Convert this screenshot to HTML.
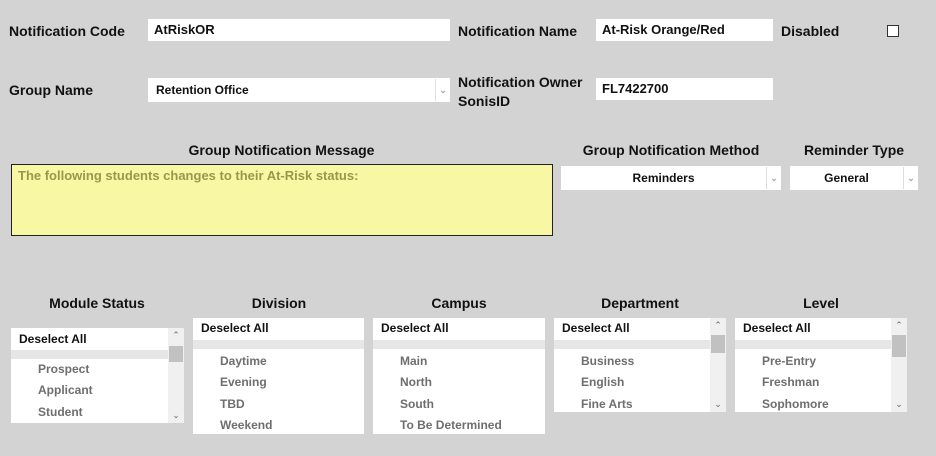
<!DOCTYPE html>
<html><head><meta charset="utf-8"><style>
*{margin:0;padding:0;box-sizing:border-box}
body{width:936px;height:456px;background:#d3d3d3;font-family:"Liberation Sans",sans-serif;position:relative;overflow:hidden;color:#111}
.a{position:absolute}
.lbl{font-weight:bold;font-size:14px;white-space:nowrap}
.inp{background:#fff;font-size:13px;font-weight:bold;padding-left:6px;line-height:22px}
.sel{background:#fff;font-size:12px;font-weight:bold;line-height:24px}
.arr{position:absolute;right:0;top:1px;bottom:1px;width:15px;border-left:1px solid #ddd;color:#aaa;font-size:9px;text-align:center;line-height:22px}
.h{font-weight:bold;font-size:14px;text-align:center}
.box{background:#fff;overflow:hidden}
.box .da{font-size:12px;font-weight:bold;padding-left:8px;height:22px;line-height:20px}
.box .sp{height:9px;background:#e6e6e6}
.box .it{font-size:12px;font-weight:bold;color:#6e6e6e;padding-left:27px;height:21.3px;line-height:21px}
.sb{position:absolute;right:0;top:0;bottom:0;width:16px;background:#f0f0f0;color:#666;font-size:9px;text-align:center}
.th{position:absolute;left:1px;width:14px;background:#c1c1c1}
</style></head><body>
<div class="a lbl" style="left:9px;top:23px">Notification Code</div>
<div class="a inp" style="left:148px;top:19px;width:302px;height:22px">AtRiskOR</div>
<div class="a lbl" style="left:458px;top:23px">Notification Name</div>
<div class="a inp" style="left:596px;top:19px;width:177px;height:22px">At-Risk Orange/Red</div>
<div class="a lbl" style="left:781px;top:23px">Disabled</div>
<div class="a" style="left:887px;top:25px;width:12px;height:12px;border:1px solid #333;background:#fff"></div>

<div class="a lbl" style="left:9px;top:82px">Group Name</div>
<div class="a sel" style="left:148px;top:78px;width:302px;height:24px;padding-left:8px">Retention Office<div class="arr">&#8964;</div></div>
<div class="a lbl" style="left:458px;top:73px;line-height:19px">Notification Owner<br>SonisID</div>
<div class="a inp" style="left:596px;top:78px;width:177px;height:22px">FL7422700</div>

<div class="a h" style="left:11px;width:541px;top:142px">Group Notification Message</div>
<div class="a" style="left:11px;top:164px;width:542px;height:72px;background:#f7f7a4;border:1px solid #222;font-size:13px;font-weight:bold;color:#98984a;padding:3px 6px">The following students changes to their At-Risk status:</div>
<div class="a h" style="left:561px;width:220px;top:142px">Group Notification Method</div>
<div class="a sel" style="left:561px;top:166px;width:220px;height:24px;text-align:center;padding-right:15px">Reminders<div class="arr">&#8964;</div></div>
<div class="a h" style="left:790px;width:128px;top:142px">Reminder Type</div>
<div class="a sel" style="left:790px;top:166px;width:128px;height:24px;text-align:center;padding-right:15px">General<div class="arr">&#8964;</div></div>

<div class="a h" style="left:11px;width:172px;top:295px">Module Status</div>
<div class="a box" style="left:11px;top:328px;width:173px;height:95px"><div class="da" style="height:22px;line-height:22px">Deselect All</div><div class="sp" style="margin-right:16px"></div><div class="it">Prospect</div><div class="it">Applicant</div><div class="it">Student</div>
<div class="sb"><div style="margin-top:2px">&#8963;</div><div class="th" style="top:18px;height:16px"></div><div style="position:absolute;bottom:2px;width:16px">&#8964;</div></div></div>

<div class="a h" style="left:193px;width:172px;top:295px">Division</div>
<div class="a box" style="left:193px;top:318px;width:171px;height:116px"><div class="da">Deselect All</div><div class="sp"></div><div class="it" style="margin-top:2px">Daytime</div><div class="it">Evening</div><div class="it">TBD</div><div class="it">Weekend</div></div>

<div class="a h" style="left:373px;width:172px;top:295px">Campus</div>
<div class="a box" style="left:373px;top:318px;width:172px;height:116px"><div class="da">Deselect All</div><div class="sp"></div><div class="it" style="margin-top:2px">Main</div><div class="it">North</div><div class="it">South</div><div class="it">To Be Determined</div></div>

<div class="a h" style="left:554px;width:172px;top:295px">Department</div>
<div class="a box" style="left:554px;top:318px;width:172px;height:94px"><div class="da">Deselect All</div><div class="sp" style="margin-right:16px"></div><div class="it" style="margin-top:2px">Business</div><div class="it">English</div><div class="it">Fine Arts</div>
<div class="sb"><div style="margin-top:2px">&#8963;</div><div class="th" style="top:17px;height:18px"></div><div style="position:absolute;bottom:2px;width:16px">&#8964;</div></div></div>

<div class="a h" style="left:735px;width:172px;top:295px">Level</div>
<div class="a box" style="left:735px;top:318px;width:172px;height:94px"><div class="da">Deselect All</div><div class="sp" style="margin-right:16px"></div><div class="it" style="margin-top:2px">Pre-Entry</div><div class="it">Freshman</div><div class="it">Sophomore</div>
<div class="sb"><div style="margin-top:2px">&#8963;</div><div class="th" style="top:17px;height:22px"></div><div style="position:absolute;bottom:2px;width:16px">&#8964;</div></div></div>
</body></html>
